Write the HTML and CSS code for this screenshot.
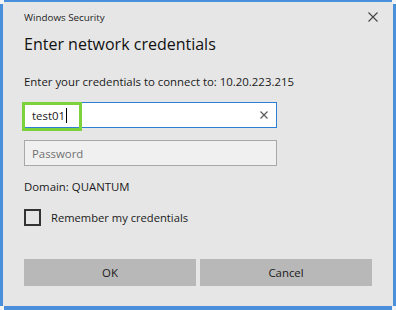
FILE: index.html
```html
<!DOCTYPE html>
<html lang="en">
<head>
  <meta charset="UTF-8" />
  <title>Windows Security</title>
  <link rel="stylesheet" href="styles.css">
</head>
<body>
  <div class="window">
    <span class="handle tl"></span>
    <span class="handle tr"></span>
    <span class="handle bl"></span>
    <span class="handle br"></span>

    <div class="titlebar">
      <span class="app">Windows Security</span>
      <svg class="close" width="10" height="10" viewBox="0 0 10 10">
        <path d="M0.5 0.5L9.5 9.5M9.5 0.5L0.5 9.5" stroke="#444" stroke-width="1.1" fill="none"/>
      </svg>
    </div>

    <div class="heading">Enter network credentials</div>
    <div class="prompt">Enter your credentials to connect to: 10.20.223.215</div>

    <div class="field user">
      <span class="value">test01<span class="caret"></span></span>
      <svg class="clear" width="8" height="8" viewBox="0 0 8 8">
        <path d="M0.5 0.5L7.5 7.5M7.5 0.5L0.5 7.5" stroke="#555" stroke-width="1.1" fill="none"/>
      </svg>
      <span class="highlight"></span>
    </div>

    <div class="field pass">
      <span class="placeholder">Password</span>
    </div>

    <div class="domain">Domain: QUANTUM</div>

    <label class="remember">
      <span class="box"></span>
      <span>Remember my credentials</span>
    </label>

    <div class="buttons">
      <div class="btn">OK</div>
      <div class="btn">Cancel</div>
    </div>
  </div>
</body>
</html>
```

FILE: styles.css
```css
body {
  margin: 0;
  font-family: 'Open Sans', 'Noto Sans', sans-serif;
  color: #1a1a1a;
}

.window {
  position: relative;
  box-sizing: border-box;
  width: 396px;
  height: 310px;
  background-color: #e6e6e6;
  border: 3px solid #4a8fdb;
  border-top-width: 2px;
  border-bottom-width: 4px;
  padding: 0 21px;
}

.handle {
  position: absolute;
  width: 4px;
  height: 4px;
  background-color: #f4f4f4;
}
.handle.tl { left: -3px; top: -2px; }
.handle.tr { right: -3px; top: -2px; }
.handle.bl { left: -3px; bottom: -4px; }
.handle.br { right: -3px; bottom: -4px; }

.titlebar {
  display: flex;
  justify-content: space-between;
  align-items: center;
  height: 30px;
  margin-right: -6px;
}

.app {
  font-size: 9.8px;
  color: #1e1e1e;
}

.heading {
  font-size: 16px;
  line-height: 24px;
  color: #111;
}

.prompt {
  font-size: 11.4px;
  line-height: 16px;
  margin-top: 18px;
}

.field {
  position: relative;
  box-sizing: border-box;
  width: 253px;
  height: 26px;
  margin-top: 12px;
  display: flex;
  align-items: center;
  padding: 0 8px 0 7px;
  font-size: 11.4px;
}

.field.user {
  background-color: #fff;
  border: 1px solid #2b7fd4;
  justify-content: space-between;
}

.caret {
  display: inline-block;
  width: 1px;
  height: 15px;
  margin-left: 1px;
  background-color: #000;
  vertical-align: -3px;
}

.highlight {
  position: absolute;
  left: -3px;
  top: -1px;
  width: 60px;
  height: 29px;
  box-sizing: border-box;
  border: 3px solid #7dd13a;
}

.field.pass {
  background-color: #f0f0f0;
  border: 1px solid #a8a8a8;
}

.placeholder {
  color: #707070;
}

.domain {
  font-size: 11.4px;
  line-height: 16px;
  margin-top: 13px;
}

.remember {
  display: flex;
  align-items: center;
  gap: 10px;
  margin-top: 14px;
  font-size: 11.2px;
}

.box {
  box-sizing: border-box;
  width: 17px;
  height: 17px;
  border: 2px solid #333;
}

.buttons {
  display: flex;
  gap: 4px;
  margin-top: 33px;
}

.btn {
  flex: 1;
  height: 27px;
  display: flex;
  align-items: center;
  justify-content: center;
  background-color: #b8b8b8;
  font-size: 11.4px;
}
```
